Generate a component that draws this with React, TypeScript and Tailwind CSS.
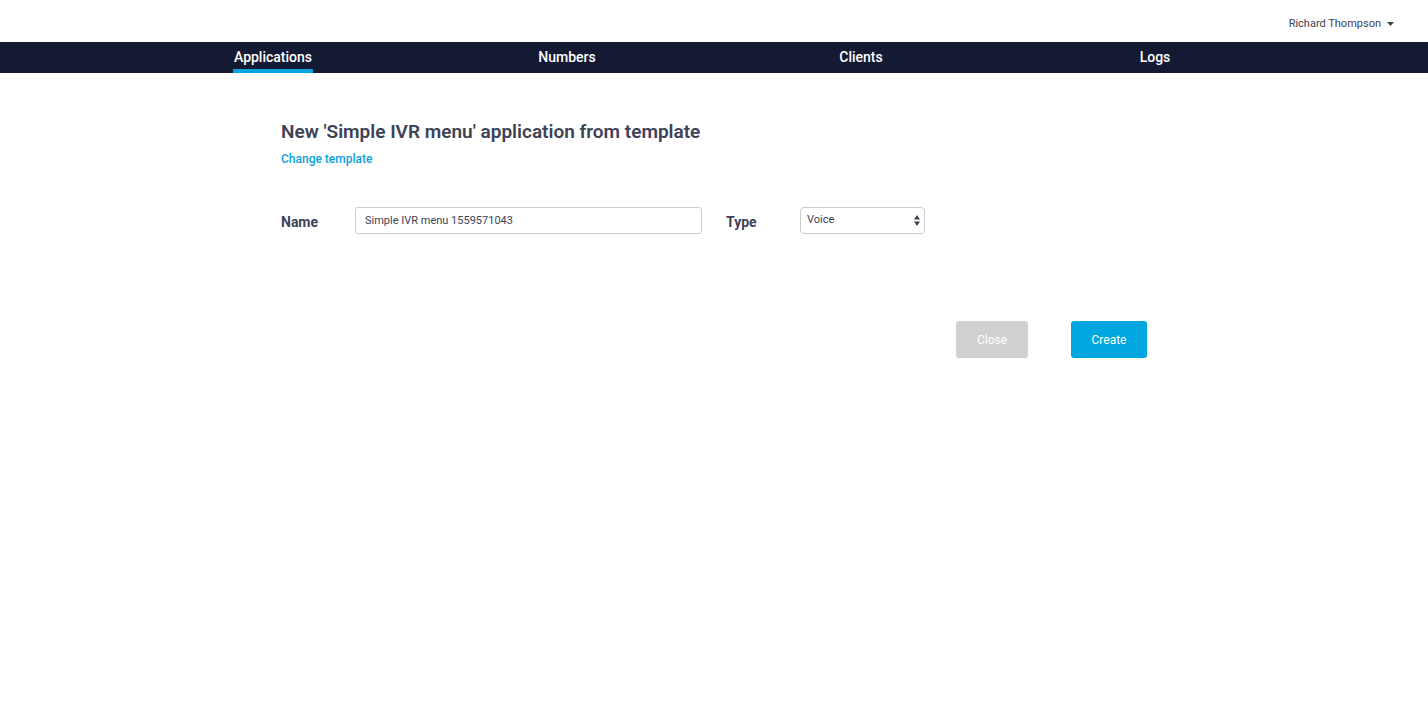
import React from 'react';

const tabs = ['Applications', 'Numbers', 'Clients', 'Logs'];

export default function App() {
  return (
    <div className="min-h-screen bg-white font-['Roboto',sans-serif] text-[#3d4256]">
      {/* Top user bar */}
      <div className="h-[42px] flex items-start justify-end pt-[17px] pr-[34px]">
        <button className="flex items-center gap-[6px] text-[11px] leading-[14px] text-[#3d4256]">
          Richard Thompson
          <svg width="7" height="4" viewBox="0 0 7 4"><path d="M0 0h7L3.5 4z" fill="#3d4256" /></svg>
        </button>
      </div>

      {/* Main nav */}
      <nav className="h-[31px] bg-[#151a34]">
        <div className="w-[1176px] mx-auto grid grid-cols-4 h-full">
          {tabs.map((t, i) => (
            <div key={t} className="flex justify-center h-full">
              <a
                className={`relative flex items-center h-full text-[14px] font-medium text-white ${i === 0 ? 'border-b-[4px] border-[#04a5df] pt-[4px] px-[1px]' : ''}`}
              >
                {t}
              </a>
            </div>
          ))}
        </div>
      </nav>

      {/* Content */}
      <div className="w-[866px] ml-[281px] pt-[46px]">
        <h1 className="text-[19px] font-semibold leading-[25px]">New 'Simple IVR menu' application from template</h1>
        <a className="block mt-[7px] text-[12px] leading-[16px] font-medium text-[#0aa3dc]">Change template</a>

        <div className="flex items-center mt-[40px]">
          <label className="w-[74px] pt-[4px] text-[14px] font-bold">Name</label>
          <input
            defaultValue="Simple IVR menu 1559571043"
            className="w-[347px] h-[27px] border border-[#c9ccd1] rounded-[3px] px-[9px] text-[11px] text-[#3d4256] outline-none"
          />
          <label className="w-[74px] ml-[24px] pt-[4px] text-[14px] font-bold">Type</label>
          <div className="relative w-[125px] h-[27px] border border-[#c9ccd1] rounded-[4px] flex items-center px-[6px] text-[11px]">
            Voice
            <svg className="absolute right-[4px] top-[7px]" width="6" height="11" viewBox="0 0 6 11">
              <path d="M0 4.5L3 0l3 4.5z M0 6.5h6L3 11z" fill="#3d4256" />
            </svg>
          </div>
        </div>

        <div className="flex justify-end gap-[43px] mt-[87px]">
          <button className="w-[72px] h-[37px] rounded-[3px] bg-[#d0d0d0] text-white text-[12px]">Close</button>
          <button className="w-[76px] h-[37px] rounded-[3px] bg-[#00a6df] text-white text-[12px]">Create</button>
        </div>
      </div>
    </div>
  );
}
